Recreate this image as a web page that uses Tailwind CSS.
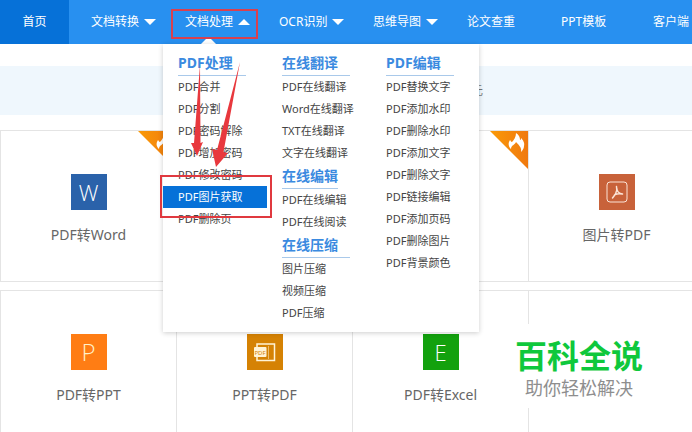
<!DOCTYPE html>
<html lang="zh-CN">
<head>
    <meta charset="UTF-8">
    <meta name="viewport" content="width=device-width, initial-scale=1.0">
    <title>PDF在线转换</title>
    <script src="https://cdn.jsdelivr.net/npm/@tailwindcss/browser@4"></script>
</head>
<body class="bg-white font-['Noto_Sans','Noto_Sans_CJK_SC',sans-serif]">
    <div class="relative h-screen overflow-hidden">

        <!-- Top navigation -->
        <nav class="flex h-11 bg-[#2890f0] text-xs text-white">
            <a href="#" class="flex w-[69px] shrink-0 items-center justify-center bg-[#0671d8]">首页</a>
            <button class="flex w-[94px] shrink-0 items-center gap-[5px] pl-[22px]">文档转换
                <svg class="h-[6px] w-3" viewBox="0 0 12 6"><path d="M0 0h12L6 6z" fill="#fff"/></svg>
            </button>
            <div class="relative flex w-[94px] shrink-0">
                <button class="flex items-center gap-[5px] pl-[22px]">文档处理
                    <svg class="h-[6px] w-3" viewBox="0 0 12 6"><path d="M0 6h12L6 0z" fill="#fff"/></svg>
                </button>
                <svg class="absolute bottom-0 left-[38px] h-[6px] w-[15px]" viewBox="0 0 15 6"><path d="M0 6 6 0h3l6 6z" fill="#fff"/></svg>
                <div class="absolute top-[9px] left-2 h-[30px] w-[87px] border-2 border-[#d9404f]"></div>

                <!-- Dropdown -->
                <div class="absolute top-11 left-0 z-10 grid w-[316px] grid-cols-3 bg-white pt-[7px] pr-1 pb-2 text-[11px] leading-[22px] text-[#444] shadow-[0_1px_5px_rgba(0,0,0,0.2)]">
                    <div>
                        <h3 class="ml-[15px] w-[68px] border-b border-[#a9c9ea] text-sm leading-6 font-bold text-[#3a8ae0]">PDF处理</h3>
                        <a href="#" class="block pl-[15px]">PDF合并</a>
                        <a href="#" class="block pl-[15px]">PDF分割</a>
                        <a href="#" class="block pl-[15px]">PDF密码解除</a>
                        <a href="#" class="block pl-[15px]">PDF增加密码</a>
                        <a href="#" class="block pl-[15px]">PDF修改密码</a>
                        <a href="#" class="block bg-[#0671d8] pl-[15px] text-white">PDF图片获取</a>
                        <a href="#" class="block pl-[15px]">PDF删除页</a>
                    </div>
                    <div>
                        <h3 class="ml-[15px] w-[68px] border-b border-[#a9c9ea] text-sm leading-6 font-bold text-[#3a8ae0]">在线翻译</h3>
                        <a href="#" class="block pl-[15px]">PDF在线翻译</a>
                        <a href="#" class="block pl-[15px] whitespace-nowrap">Word在线翻译</a>
                        <a href="#" class="block pl-[15px]">TXT在线翻译</a>
                        <a href="#" class="block pl-[15px]">文字在线翻译</a>
                        <h3 class="ml-[15px] w-14 border-b border-[#a9c9ea] text-sm leading-6 font-bold text-[#3a8ae0]">在线编辑</h3>
                        <a href="#" class="block pl-[15px]">PDF在线编辑</a>
                        <a href="#" class="block pl-[15px]">PDF在线阅读</a>
                        <h3 class="ml-[15px] w-[68px] border-b border-[#a9c9ea] text-sm leading-6 font-bold text-[#3a8ae0]">在线压缩</h3>
                        <a href="#" class="block pl-[15px]">图片压缩</a>
                        <a href="#" class="block pl-[15px]">视频压缩</a>
                        <a href="#" class="block pl-[15px]">PDF压缩</a>
                    </div>
                    <div>
                        <h3 class="ml-[15px] w-[68px] border-b border-[#a9c9ea] text-sm leading-6 font-bold text-[#3a8ae0]">PDF编辑</h3>
                        <a href="#" class="block pl-[15px]">PDF替换文字</a>
                        <a href="#" class="block pl-[15px]">PDF添加水印</a>
                        <a href="#" class="block pl-[15px]">PDF删除水印</a>
                        <a href="#" class="block pl-[15px]">PDF添加文字</a>
                        <a href="#" class="block pl-[15px]">PDF删除文字</a>
                        <a href="#" class="block pl-[15px]">PDF链接编辑</a>
                        <a href="#" class="block pl-[15px]">PDF添加页码</a>
                        <a href="#" class="block pl-[15px]">PDF删除图片</a>
                        <a href="#" class="block pl-[15px]">PDF背景颜色</a>
                    </div>

                    <!-- Highlight frame and arrows -->
                    <div class="absolute top-[131px] -left-[3px] h-[43px] w-28 border-2 border-[#e0393f]"></div>
                    <svg class="absolute top-0 left-0 h-[130px] w-[100px]" viewBox="163 44 100 130" fill="#e8383d">
                        <path d="M200 65 200.500 143 203 142 197 156 191 143 194 143z"/>
                        <path d="M240 62 223.500 152 228 153 216 167 212 149 217 150z"/>
                    </svg>
                </div>
            </div>
            <button class="flex w-[94px] shrink-0 items-center gap-[5px] pl-[22px]">OCR识别
                <svg class="h-[6px] w-3" viewBox="0 0 12 6"><path d="M0 0h12L6 6z" fill="#fff"/></svg>
            </button>
            <button class="flex w-[94px] shrink-0 items-center gap-[5px] pl-[22px]">思维导图
                <svg class="h-[6px] w-3" viewBox="0 0 12 6"><path d="M0 0h12L6 6z" fill="#fff"/></svg>
            </button>
            <a href="#" class="flex w-[94px] shrink-0 items-center pl-[22px]">论文查重</a>
            <a href="#" class="flex w-[94px] shrink-0 items-center pl-[22px]">PPT模板</a>
            <a href="#" class="flex w-[94px] shrink-0 items-center pl-5">客户端</a>
        </nav>

        <!-- Notice bar -->
        <p class="mt-[22px] bg-[#eff7fd] pl-[471px] text-xs leading-[49px] text-[#777]">元</p>

        <!-- Tools -->
        <main class="mt-[15px] -mr-3 grid grid-cols-4 gap-y-2 text-center text-sm leading-5 text-[#666]">
            <a href="#" class="relative flex h-38 flex-col items-center border-y border-l border-[#e4e4e4] pt-[43px]">
                <svg class="absolute top-0 right-0 size-[38px]" viewBox="0 0 38 38">
                    <defs><linearGradient id="hot"><stop offset="0" stop-color="#fa9a08"/><stop offset="1" stop-color="#f0790f"/></linearGradient></defs>
                    <path d="M0 0h38v38z" fill="url(#hot)"/>
                    <path d="M21 18c-3-3-3-6-1-9 1 1 1 2 2 2 2-2 4-5 4-9 3 2 4 4 4 7 1 0 1-1 1-2 2 2 4 5 3 8 0 2-1 4-3 6 1-4-2-7-5-10-1 3-5 3-5 7z" fill="#fff"/>
                </svg>
                <span class="flex size-9 items-center justify-center bg-[#2a62aa] font-['Open_Sans',sans-serif] text-[22px] font-light text-white">W</span>
                <span class="mt-[15px]">PDF转Word</span>
            </a>
            <div class="h-38 border-y border-l border-[#e4e4e4]"></div>
            <div class="relative h-38 border-y border-l border-[#e4e4e4]">
                <svg class="absolute top-0 right-0 size-[38px]" viewBox="0 0 38 38">
                    <path d="M0 0h38v38z" fill="url(#hot)"/>
                    <path d="M21 18c-3-3-3-6-1-9 1 1 1 2 2 2 2-2 4-5 4-9 3 2 4 4 4 7 1 0 1-1 1-2 2 2 4 5 3 8 0 2-1 4-3 6 1-4-2-7-5-10-1 3-5 3-5 7z" fill="#fff"/>
                </svg>
            </div>
            <a href="#" class="flex h-38 flex-col items-center border-y border-l border-[#e4e4e4] pt-[43px]">
                <svg class="size-9" viewBox="0 0 36 36" fill="none" stroke="#fbe3d6">
                    <path d="M0 0h36v36H0z" fill="#c8623a" stroke="none"/>
                    <rect x="8" y="8" width="20" height="20" rx="3"/>
                    <path d="M17.500 12.500c.8 2.500.3 5-1 7.500L13.500 24M17.700 14c.2 3 2 5.500 5.800 6M15.500 20.800c2-1 5-1.500 8-.8" stroke-width="1.500" stroke-linecap="round"/>
                </svg>
                <span class="mt-[15px]">图片转PDF</span>
            </a>

            <a href="#" class="flex h-38 flex-col items-center border-y border-l border-[#e4e4e4] pt-[43px]">
                <span class="flex size-9 items-center justify-center bg-[#ff7d14] font-['Open_Sans',sans-serif] text-2xl font-light text-[#fff1c9]">P</span>
                <span class="mt-[15px]">PDF转PPT</span>
            </a>
            <a href="#" class="flex h-38 flex-col items-center border-y border-l border-[#e4e4e4] pt-[43px]">
                <svg class="size-9" viewBox="0 0 36 36" fill="none">
                    <path d="M0 0h36v36H0z" fill="#d58204"/>
                    <path d="M10 13v-3h17.500v16.500H10V23" stroke="#fff3d6" stroke-width="1.500"/>
                    <path d="M21.500 12v13" stroke="#fff3d6" stroke-opacity=".5"/>
                    <rect x="7" y="13" width="12.500" height="10" rx="1" fill="#fff3d6"/>
                    <text x="13" y="20.500" text-anchor="middle" font-size="6" fill="#d58204">PDF</text>
                </svg>
                <span class="mt-[15px]">PPT转PDF</span>
            </a>
            <a href="#" class="flex h-38 flex-col items-center border-y border-l border-[#e4e4e4] pt-[43px]">
                <span class="flex size-9 items-center justify-center bg-[#13a10e] font-['Open_Sans',sans-serif] text-[22px] font-light text-white">E</span>
                <span class="mt-[15px]">PDF转Excel</span>
            </a>
            <div class="h-38 border-y border-l border-[#e4e4e4]"></div>
        </main>

        <!-- Watermark -->
        <div class="absolute right-6 bottom-6 flex w-[178px] flex-col items-center bg-white pt-3 pb-2">
            <strong class="text-[32px] leading-10 font-bold text-[#0fc83c]">百科全说</strong>
            <span class="text-lg leading-6 text-[#8e8e8e]">助你轻松解决</span>
        </div>
    </div>
</body>
</html>
